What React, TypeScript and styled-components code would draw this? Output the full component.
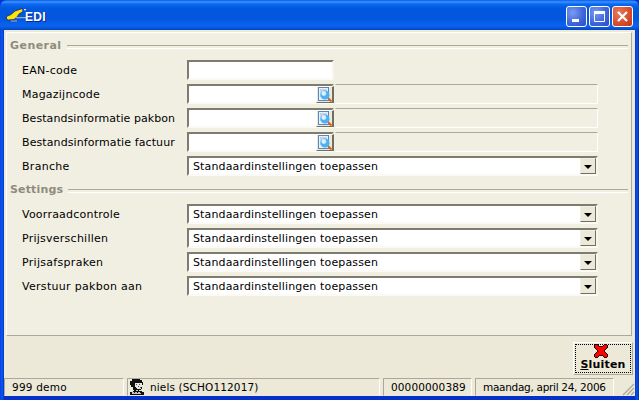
import React from "react";
import styled, { createGlobalStyle } from "styled-components";

const Global = createGlobalStyle`
  html, body { margin: 0; padding: 0; background: #0831d9; }
  body { width: 639px; height: 400px; overflow: hidden; }
  * { box-sizing: border-box; }
`;

const Win = styled.div`
  width: 639px; height: 400px; display: flex; flex-direction: column;
  font-family: "DejaVu Sans", Verdana, sans-serif; font-size: 11px; color: #000;
  background: linear-gradient(90deg, #0a3ee0 0, #0a5cf0 2px, #0531c8 4px, #0531c8 635px, #0a54e8 637px, #002bb8 639px);
  border-radius: 7px 7px 0 0; overflow: hidden;
`;
const TitleBar = styled.div`
  height: 30px; flex: none; display: flex; align-items: center; padding: 0 6px 0 6px;
  background: linear-gradient(180deg, #0a5be6 0, #3b93ff 2px, #0a6af0 4px, #0358e0 8px, #0355dd 18px, #0a64ee 26px, #0251d6 29px, #0244b8 30px);
`;
const TitleText = styled.span`
  font: bold 12px "Liberation Sans", Arial, sans-serif; color: #fff;
  text-shadow: 1px 1px 0 #0a2a90; flex: 1; position: relative; top: 2px; left: -1px; letter-spacing: 0.3px;
`;
const CapBtn = styled.div<{ $close?: boolean }>`
  width: 21px; height: 21px; margin-left: 2px; border: 1px solid #fff; border-radius: 3px;
  display: flex; align-items: center; justify-content: center; position: relative; top: 1px;
  background: ${(p) => p.$close
    ? "radial-gradient(circle at 30% 30%, #e8795c, #d8502f 55%, #c23512)"
    : "radial-gradient(circle at 30% 30%, #7a9cf0, #3f67dc 55%, #2a4cc8)"};
`;
const Client = styled.div`
  flex: 1; min-height: 0; margin: 0 4px 4px; background: #ece9d8; display: flex; flex-direction: column;
`;
const Panel = styled.div`
  height: 304px; margin: 2px 3px 0 2px; flex: none; background: #f1efe2;
  border: 1px solid; border-color: #fff #aca899 #aca899 #fff;
  padding: 4px 3px 0 3px;
`;
const SectionHead = styled.div<{ $ls: number; $top?: number }>`
  display: flex; align-items: center; height: 16px; margin-bottom: 7px; margin-top: ${(p) => p.$top ?? 0}px;
  font-weight: bold; color: #8f8c7f; letter-spacing: ${(p) => p.$ls}px;
  &::after { content: ""; flex: 1; height: 2px; margin-left: 5px; margin-top: 3px;
    border-top: 1px solid #aca899; border-bottom: 1px solid #fff; }
`;
const Rows = styled.div`
  display: flex; flex-direction: column; gap: 4px; padding-left: 12px;
`;
const Row = styled.div`
  display: flex; align-items: center; height: 20px;
`;
const Label = styled.label<{ $ls?: number }>`
  width: 165px; flex: none; white-space: nowrap; letter-spacing: ${(p) => p.$ls ?? 0.3}px;
`;
const Sunken = styled.div<{ $w: number }>`
  width: ${(p) => p.$w}px; height: 20px; flex: none; background: #fff; position: relative;
  border: 2px solid; border-color: #7f7c6f #f6f5ee #fbfaf5 #7f7c6f;
`;
const Lookup = styled.div`
  position: absolute; right: -2px; top: 0; bottom: -1px; width: 18px; background: #ece9d8;
  border: 1px solid; border-color: #fff #716f64 #716f64 #fff; border-right-width: 2px;
  display: flex; align-items: center; justify-content: center;
`;
const Extra = styled.div`
  flex: none; width: 263px; height: 20px; margin-left: 1px; background: #f1efe2;
  border: 1px solid; border-color: #aca899 #fff #fff #f1efe2;
`;
const SelectBox = styled.div`
  width: 411px; height: 20px; flex: none; background: #fff; position: relative;
  border: 2px solid; border-color: #7f7c6f #f6f5ee #fbfaf5 #7f7c6f;
  padding-left: 4px; display: flex; align-items: center; letter-spacing: 0.14px;
`;
const DropBtn = styled.div`
  position: absolute; right: 0; top: 0; bottom: 0; width: 16px; background: #ece9d8;
  border: 1px solid; border-color: #f1efe2 #716f64 #716f64 #f1efe2;
  display: flex; align-items: center; justify-content: center;
  &::after { content: ""; border: 4px solid transparent; border-top: 4px solid #000; border-bottom: 0; margin-top: 1px; }
`;
const Footer = styled.div`
  flex: 1; display: flex; justify-content: flex-end; align-items: flex-start; padding: 6px 2px 0 0;
`;
const CloseBtn = styled.button`
  width: 60px; height: 33px; padding: 1px 0 0; background: #ece9d8; position: relative;
  border: 1px solid; border-color: #fff #aca899 #aca899 #fff;
  display: flex; flex-direction: column; align-items: center; font: bold 11px "DejaVu Sans", Verdana, sans-serif;
  letter-spacing: 0.2px; color: #000;
  &::before { content: ""; position: absolute; inset: 1px; border: 1px dotted #000; }
  u { text-decoration-thickness: 1px; }
  svg { margin-right: 4px; }
`;
const Status = styled.div`
  height: 18px; flex: none; display: flex;
`;
const Cell = styled.div<{ $w: number; $ml?: number; $pl?: number; $ls: number }>`
  width: ${(p) => p.$w}px; margin-left: ${(p) => p.$ml ?? 0}px; padding-left: ${(p) => p.$pl ?? 7}px; flex: none;
  display: flex; align-items: center; gap: 6px; letter-spacing: ${(p) => p.$ls}px; font-size: 10.5px; white-space: nowrap;
  border: 1px solid; border-color: #aca899 #fff transparent #aca899;
`;
const Grip = styled.svg`
  margin-left: auto; align-self: flex-end;
`;

const HandIcon = () => (
  <svg width="20" height="16" viewBox="0 0 20 16">
    <path d="M0.5 9.5L5 7.5 9 4 16.5 1.5 17 4.5 13 7 11 10 8 12.5 2.5 13 0.5 12z" fill="#ffe600" stroke="#15297c" strokeWidth="0.8" />
    <path d="M10 10h10v1.2H10zM5 13.5h6v1H5z" fill="#a9a9b4" />
    <path d="M18 2h2.5v1.2H18z" fill="#e6e6e6" />
  </svg>
);
const LookupIcon = () => (
  <svg width="15" height="15" viewBox="0 0 15 15">
    <rect x="1.5" y="0.5" width="10" height="13" fill="#eaf2fb" stroke="#5a86bc" />
    <path d="M3 3h7M3 5h2M3 7h1.5M3 9h1.5" stroke="#9fb3cc" />
    <circle cx="8" cy="8" r="4.6" fill="#4fb0f2" />
    <circle cx="6.8" cy="6.5" r="2.4" fill="#d2f0ff" />
    <path d="M11.5 11.5l3 3" stroke="#e0620f" strokeWidth="2.2" />
  </svg>
);
const PersonIcon = () => (
  <svg width="14" height="16" viewBox="0 0 14 16" shapeRendering="crispEdges">
    <path d="M2 0h8v1h2v2h1v3h-1v4h-1v1H9v1h3v1h2v3H0v-3h3v-1h1v-1H3V8H1V6H0V2h2z" fill="#111" />
    <path d="M5 4h7v4h-1v2H7V9H6V8H5z" fill="#e8e8e0" />
    <path d="M6 5h1v1H6zM9 5h1v1H9zM8 7h1v1H8zM10 8h1v1h-1z" fill="#555" />
    <path d="M2 13h2v1h1v-1h2v1h1v-1h2v1h1v1H2zM6 11h2v1H6z" fill="#c8c8c0" />
  </svg>
);
const RedX = () => (
  <svg width="14" height="14" viewBox="0 0 14 14" shapeRendering="crispEdges">
    <path d="M1 0h3v1h1v1h4V1h1V0h3v1h1v3h-1v1h-1v1h-1v2h1v1h1v1h1v3h-1v1h-3v-1H9v-1H5v1H4v1H1v-1H0v-3h1V9h1V8h1V6H2V5H1V4H0V1h1z" fill="#200" />
    <path d="M1 1h3v1h1v1h4V2h1V1h3v3h-1v1h-1v1h-1v2h1v1h1v1h1v3h-3v-1H9v-1H5v1H4v1H1v-3h1V9h1V8h1V6H3V5H2V4H1z" fill="#f00" />
  </svg>
);

const Std = "Standaardinstellingen toepassen";
const Select = () => <SelectBox>{Std}<DropBtn /></SelectBox>;
const LookupRow = ({ label, ls }: { label: string; ls?: number }) => (
  <Row>
    <Label $ls={ls}>{label}</Label>
    <Sunken $w={147}><Lookup><LookupIcon /></Lookup></Sunken>
    <Extra />
  </Row>
);
const SelectRow = ({ label, ls }: { label: string; ls?: number }) => (
  <Row><Label $ls={ls}>{label}</Label><Select /></Row>
);

export default function App() {
  return (
    <Win>
      <Global />
      <TitleBar>
        <HandIcon />
        <TitleText>EDI</TitleText>
        <CapBtn>
          <svg width="13" height="13" viewBox="0 0 13 13"><rect x="2" y="9" width="7" height="3" fill="#fff" /></svg>
        </CapBtn>
        <CapBtn>
          <svg width="13" height="13" viewBox="0 0 13 13"><path d="M1.5 1.5h10v10h-10z" fill="none" stroke="#fff" /><rect x="1" y="1" width="11" height="3" fill="#fff" /></svg>
        </CapBtn>
        <CapBtn $close>
          <svg width="13" height="13" viewBox="0 0 13 13"><path d="M2 2l9 9M11 2l-9 9" stroke="#fff" strokeWidth="2.2" /></svg>
        </CapBtn>
      </TitleBar>
      <Client>
        <Panel>
          <SectionHead $ls={0.45}>General</SectionHead>
          <Rows>
            <Row><Label $ls={0.25}>EAN-code</Label><Sunken $w={147} /></Row>
            <LookupRow label="Magazijncode" ls={0.22} />
            <LookupRow label="Bestandsinformatie pakbon" ls={0.06} />
            <LookupRow label="Bestandsinformatie factuur" ls={0.1} />
            <SelectRow label="Branche" />
          </Rows>
          <SectionHead $ls={0.15} $top={5}>Settings</SectionHead>
          <Rows>
            <SelectRow label="Voorraadcontrole" ls={0.23} />
            <SelectRow label="Prijsverschillen" ls={0.25} />
            <SelectRow label="Prijsafspraken" />
            <SelectRow label="Verstuur pakbon aan" />
          </Rows>
        </Panel>
        <Footer>
          <CloseBtn><RedX /><span><u>S</u>luiten</span></CloseBtn>
        </Footer>
        <Status>
          <Cell $w={120} $ls={0.2}>999 demo</Cell>
          <Cell $w={253} $ml={3} $pl={2} $ls={0.13}><PersonIcon />niels (SCHO112017)</Cell>
          <Cell $w={89} $ml={3} $ls={0.12}>00000000389</Cell>
          <Cell $w={139} $ml={3} $ls={-0.3}>maandag, april 24, 2006</Cell>
          <Grip width="14" height="14" viewBox="0 0 14 14">
            <path d="M13 2L2 13M13 6l-7 7M13 10l-3 3" stroke="#aca899" strokeWidth="1.3" />
          </Grip>
        </Status>
      </Client>
    </Win>
  );
}
